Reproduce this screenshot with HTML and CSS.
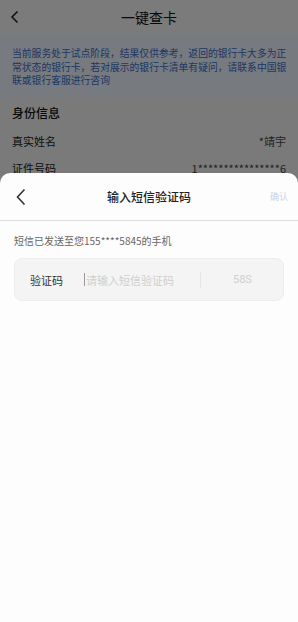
FILE: index.html
```html
<!DOCTYPE html>
<html lang="zh-CN">
<head>
    <meta charset="UTF-8">
    <meta name="viewport" content="width=device-width, initial-scale=1.0">
    <title>一键查卡</title>
    <link rel="stylesheet" href="styles.css">
</head>
<body>
    <div class="page">
        <div class="nav">
            <svg class="nav-back" width="10" height="14" viewBox="0 0 10 14"><path d="M7.5 1.5 L2 7 L7.5 12.5" fill="none" stroke="#222" stroke-width="1.6"/></svg>
            <div class="nav-title">一键查卡</div>
        </div>
        <div class="notice">当前服务处于试点阶段，结果仅供参考，返回的银行卡大多为正常状态的银行卡，若对展示的银行卡清单有疑问，请联系中国银联或银行客服进行咨询</div>
        <div class="section-title">身份信息</div>
        <div class="row">
            <span>真实姓名</span>
            <span class="row-value">*靖宇</span>
        </div>
        <div class="row">
            <span>证件号码</span>
            <span class="row-value">1****************6</span>
        </div>
    </div>

    <div class="mask">
        <div class="sheet">
            <div class="sheet-head">
                <svg class="sheet-back" width="12" height="18" viewBox="0 0 12 18"><path d="M9.5 1.5 L2.5 9 L9.5 16.5" fill="none" stroke="#333" stroke-width="1.6"/></svg>
                <div class="sheet-title">输入短信验证码</div>
                <div class="sheet-ok">确认</div>
            </div>
            <div class="sheet-body">
                <p class="sent-tip">短信已发送至您155****5845的手机</p>
                <div class="code-box">
                    <span class="code-label">验证码</span>
                    <span class="code-input"><i class="caret"></i>请输入短信验证码</span>
                    <span class="code-split"></span>
                    <span class="code-timer">58S</span>
                </div>
            </div>
        </div>
    </div>
</body>
</html>
```

FILE: styles.css
```css
* {
    box-sizing: border-box;
}
html, body {
    margin: 0;
    padding: 0;
}
body {
    width: 298px;
    height: 622px;
    position: relative;
    overflow: hidden;
    font-family: "Noto Sans CJK SC", "Noto Sans", sans-serif;
    background-color: #f4f4f4;
    color: #333;
}
.nav {
    height: 34px;
    display: flex;
    align-items: center;
    justify-content: center;
    position: relative;
    background-color: #f6f6f6;
}
.nav-back {
    position: absolute;
    left: 10px;
    top: 10px;
}
.nav-title {
    font-size: 14px;
    color: #111;
}
.notice {
    background-color: #eef4fe;
    color: #3d6fc8;
    font-size: 9.8px;
    line-height: 13.5px;
    padding: 13px 6px 9px 12px;
}
.section-title {
    font-size: 12px;
    font-weight: 500;
    color: #111;
    padding: 7px 12px 0 12px;
    height: 35px;
}
.row {
    display: flex;
    justify-content: space-between;
    font-size: 11px;
    color: #222;
    padding: 0 12px;
    height: 27px;
    line-height: 18px;
}
.row-value {
    color: #444;
}
.mask {
    position: absolute;
    left: 0;
    top: 0;
    right: 0;
    bottom: 0;
    background-color: rgba(0, 0, 0, 0.5);
    display: flex;
    flex-direction: column;
    justify-content: flex-end;
}
.sheet {
    height: 449px;
    background-color: #fdfdfd;
    border-radius: 10px 10px 0 0;
}
.sheet-head {
    height: 48px;
    display: flex;
    align-items: center;
    justify-content: center;
    position: relative;
    border-bottom: 1px solid #dedede;
}
.sheet-back {
    position: absolute;
    left: 15px;
    top: 15px;
}
.sheet-title {
    font-size: 12px;
    font-weight: 500;
    color: #222;
}
.sheet-ok {
    position: absolute;
    right: 10px;
    top: 17px;
    font-size: 9px;
    color: #c3d3ea;
}
.sheet-body {
    padding: 13px 14px 0 14px;
}
.sent-tip {
    margin: 0;
    font-size: 10px;
    line-height: 14px;
    color: #666;
}
.code-box {
    margin-top: 10px;
    height: 43px;
    border-radius: 8px;
    background-color: #f4f4f4;
    border: 1px solid #ededed;
    display: flex;
    align-items: center;
    padding-left: 15px;
}
.code-label {
    font-size: 11px;
    color: #333;
    width: 54px;
}
.code-input {
    font-size: 11px;
    color: #cfcfcf;
    display: flex;
    align-items: center;
    width: 116px;
}
.caret {
    display: inline-block;
    width: 1px;
    height: 13px;
    background-color: #999;
    margin-right: 1px;
}
.code-split {
    width: 1px;
    height: 16px;
    background-color: #e6e6e6;
}
.code-timer {
    margin-left: 32px;
    font-size: 11px;
    color: #cfcfcf;
    font-family: "Roboto", "Noto Sans", sans-serif;
}
```
